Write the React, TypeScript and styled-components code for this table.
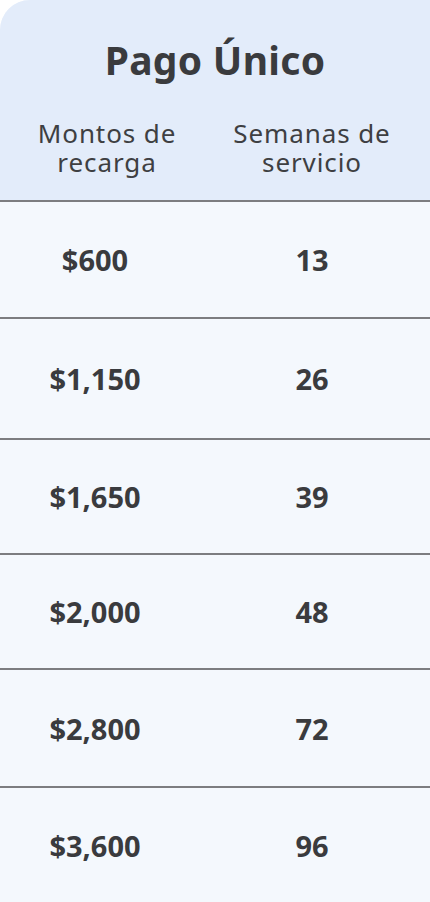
import React from 'react';
import styled, { createGlobalStyle } from 'styled-components';

const GlobalStyle = createGlobalStyle`
  html, body {
    margin: 0;
    padding: 0;
    background: #ffffff;
  }
  body {
    font-family: "Noto Sans", "Open Sans", sans-serif;
    color: #3a3b3e;
  }
`;

const Card = styled.div`
  width: 430px;
  height: 902px;
  overflow: hidden;
  background: #f4f8fd;
  border-top-left-radius: 30px;
  display: flex;
  flex-direction: column;
`;

const Header = styled.div`
  background: #e3ecfa;
  height: 200px;
  display: flex;
  flex-direction: column;
  align-items: center;
  box-sizing: border-box;
  padding-top: 34px;
`;

const Title = styled.h1`
  margin: 0;
  font-size: 39px;
  line-height: 52px;
  font-weight: 700;
  letter-spacing: 0.3px;
  color: #3a3b3e;
`;

const LabelRow = styled.div`
  width: 100%;
  display: grid;
  grid-template-columns: 214px 196px;
  margin-top: 33px;
`;

const Label = styled.div`
  text-align: center;
  font-size: 26px;
  line-height: 29px;
  font-weight: 400;
  letter-spacing: 0.9px;
  color: #3e3f42;
`;

const Row = styled.div<{ $h: number }>`
  height: ${p => p.$h}px;
  border-top: 2px solid #7c7d80;
  box-sizing: border-box;
  display: grid;
  grid-template-columns: 190px 244px;
  align-items: center;
`;

const Value = styled.div`
  text-align: center;
  font-size: 29px;
  font-weight: 700;
  color: #3a3b3e;
`;

const rows = [
  { amount: '$600', weeks: '13', h: 117 },
  { amount: '$1,150', weeks: '26', h: 121 },
  { amount: '$1,650', weeks: '39', h: 115 },
  { amount: '$2,000', weeks: '48', h: 115 },
  { amount: '$2,800', weeks: '72', h: 118 },
  { amount: '$3,600', weeks: '96', h: 116 },
];

export default function App() {
  return (
    <>
      <GlobalStyle />
      <Card>
        <Header>
          <Title>Pago Único</Title>
          <LabelRow>
            <Label>Montos de<br />recarga</Label>
            <Label>Semanas de<br />servicio</Label>
          </LabelRow>
        </Header>
        {rows.map(r => (
          <Row key={r.amount} $h={r.h}>
            <Value>{r.amount}</Value>
            <Value>{r.weeks}</Value>
          </Row>
        ))}
      </Card>
    </>
  );
}
